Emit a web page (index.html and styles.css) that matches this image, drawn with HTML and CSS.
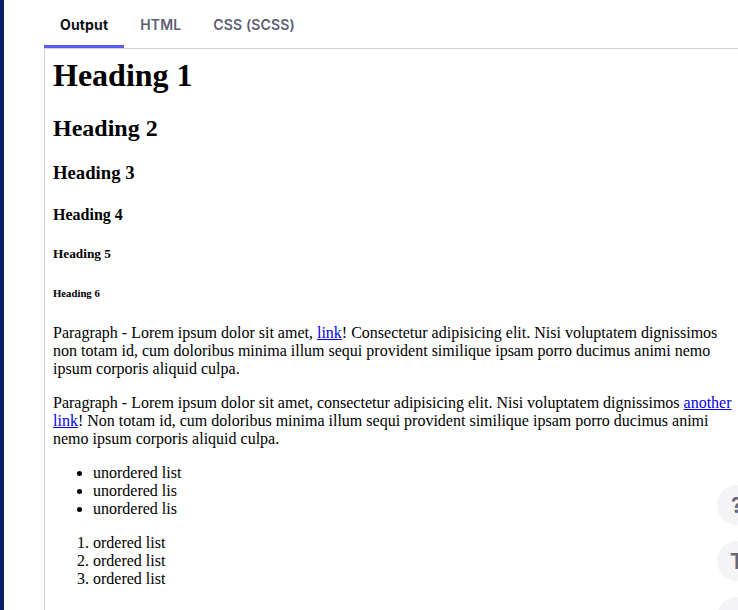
FILE: index.html
```html
<!DOCTYPE html>
<html lang="en">
<head>
<meta charset="utf-8">
<title>Output</title>
<link rel="stylesheet" href="styles.css">
</head>
<body>
<div class="page">
  <aside class="stripe"></aside>
  <main class="main">
    <nav class="tabs">
      <a class="tab active">Output</a>
      <a class="tab">HTML</a>
      <a class="tab">CSS (SCSS)</a>
    </nav>
    <section class="frame">
      <h1>Heading 1</h1>
      <h2>Heading 2</h2>
      <h3>Heading 3</h3>
      <h4>Heading 4</h4>
      <h5>Heading 5</h5>
      <h6>Heading 6</h6>
      <p>Paragraph - Lorem ipsum dolor sit amet, <a href="#">link</a>! Consectetur adipisicing elit. Nisi voluptatem dignissimos non totam id, cum doloribus minima illum sequi provident similique ipsam porro ducimus animi nemo ipsum corporis aliquid culpa.</p>
      <p>Paragraph - Lorem ipsum dolor sit amet, consectetur adipisicing elit. Nisi voluptatem dignissimos <a href="#">another link</a>! Non totam id, cum doloribus minima illum sequi provident similique ipsam porro ducimus animi nemo ipsum corporis aliquid culpa.</p>
      <ul>
        <li>unordered list</li>
        <li>unordered lis</li>
        <li>unordered lis</li>
      </ul>
      <ol>
        <li>ordered list</li>
        <li>ordered list</li>
        <li>ordered list</li>
      </ol>
    </section>
  </main>
  <div class="fabs">
    <span class="fab">?</span>
    <span class="fab">T</span>
    <span class="fab"></span>
  </div>
</div>
</body>
</html>
```

FILE: styles.css
```css
html, body {
  margin: 0;
  padding: 0;
  background: #ffffff;
  overflow: hidden;
}

.page {
  position: relative;
  display: flex;
  width: 738px;
  height: 610px;
  overflow: hidden;
}

.stripe {
  width: 4px;
  flex: none;
  background: #0c1f66;
}

.main {
  flex: 1;
  display: flex;
  flex-direction: column;
  padding-left: 40px;
  min-width: 0;
}

.tabs {
  display: flex;
  height: 48px;
  border-bottom: 1px solid #d3d3db;
  font-family: Inter, "Open Sans", "Liberation Sans", sans-serif;
  font-size: 14px;
  font-weight: 600;
  letter-spacing: 0.15px;
}

.tab {
  display: flex;
  align-items: center;
  padding: 4px 16px 0;
  color: #5b5e72;
  border-bottom: 3px solid transparent;
  box-sizing: border-box;
  height: 48px;
}

.tab.active {
  color: #0e0e16;
  font-weight: 700;
  border-bottom-color: #5b5bef;
}

.frame {
  flex: 1;
  border-left: 1px solid #cfcfd4;
  padding: 8px 0 0 8px;
  font-family: "Liberation Serif", "Times New Roman", serif;
  font-size: 16px;
  color: #000;
}

.frame h1 {
  margin-top: 0;
}

.frame a {
  color: #0000ee;
}

.fabs {
  position: absolute;
  top: 485px;
  right: -19px;
  display: flex;
  flex-direction: column;
  gap: 16px;
}

.fab {
  width: 40px;
  height: 40px;
  border-radius: 50%;
  background: #f4f4f6;
  color: #676878;
  font-family: Inter, "Open Sans", "Liberation Sans", sans-serif;
  font-weight: 700;
  font-size: 21px;
  display: flex;
  align-items: center;
  justify-content: center;
}
```
